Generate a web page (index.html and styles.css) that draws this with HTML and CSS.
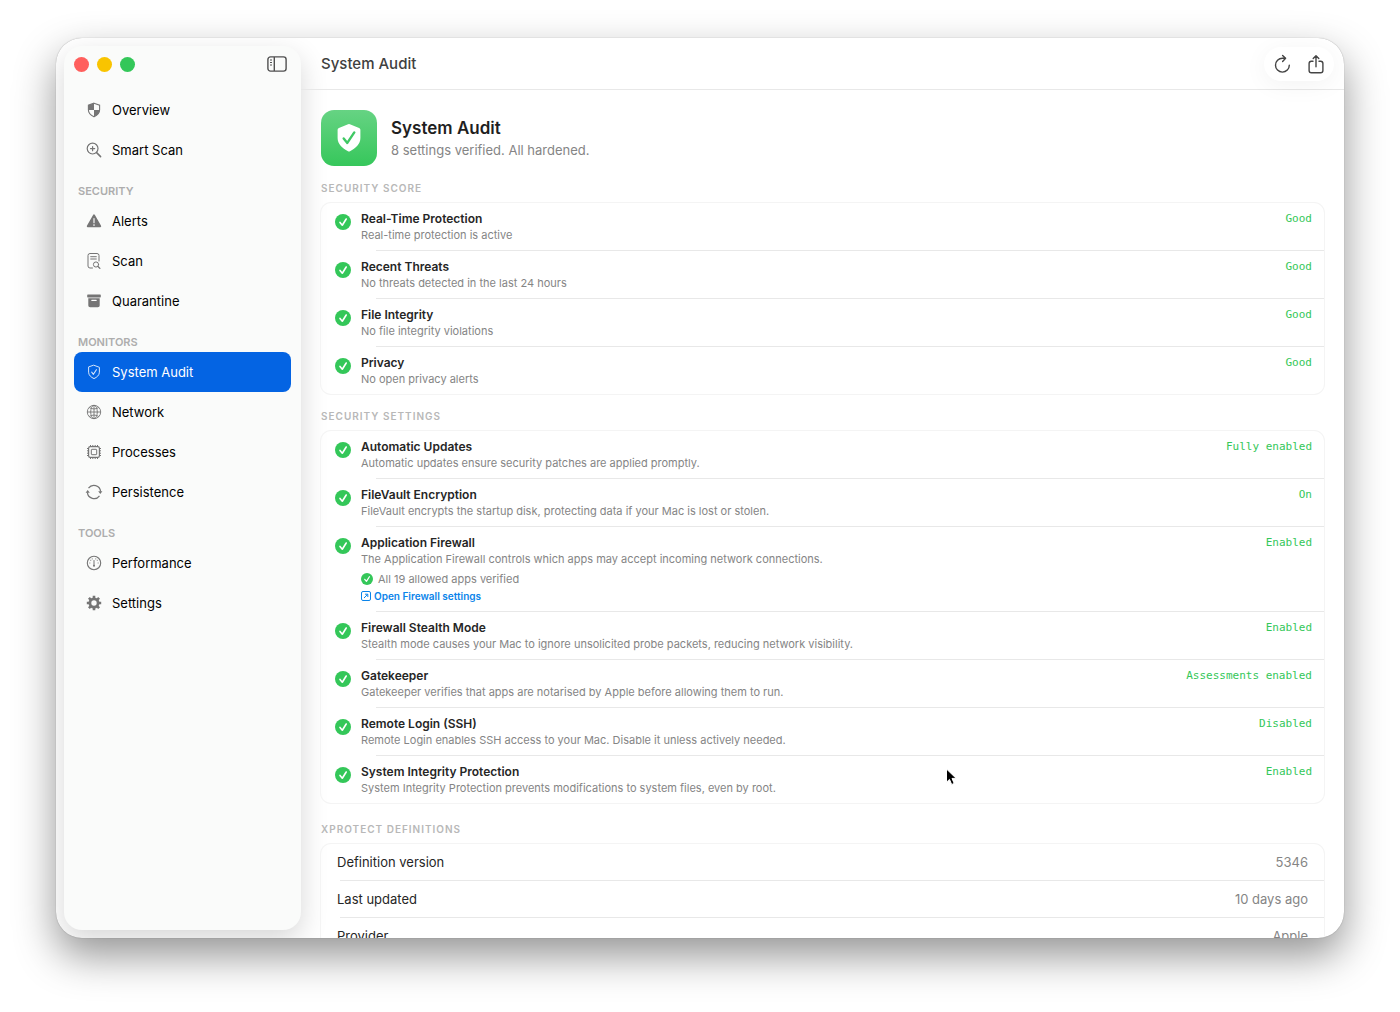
FILE: index.html
```html
<!DOCTYPE html>
<html lang="en">
  <head>
    <meta charset="utf-8">
    <title>System Audit</title>
    <link rel="stylesheet" href="styles.css">
  </head>
  <body>
    <!-- shared icons -->
    <svg class="defs" width="0" height="0" aria-hidden="true">
      <symbol id="check" viewBox="0 0 16 16">
        <circle cx="8" cy="8" r="8" fill="#34c759" />
        <path d="M5 8.4l2.3 2.8 3.9-6.2" fill="none" stroke="#fff" stroke-width="1.6" stroke-linecap="round" stroke-linejoin="round" />
      </symbol>
    </svg>

    <div class="window">
      <aside class="sidebar">
        <div class="sidebar-top">
          <div class="lights">
            <button class="light red" type="button" aria-label="Close"></button>
            <button class="light yellow" type="button" aria-label="Minimize"></button>
            <button class="light green" type="button" aria-label="Zoom"></button>
          </div>
          <button class="icon-btn" type="button" aria-label="Toggle sidebar">
            <svg width="20" height="16" viewBox="0 0 20 16" fill="none" stroke="#505050" stroke-width="1.4">
              <rect x="0.9" y="0.9" width="18.2" height="14.2" rx="2.6" />
              <path d="M7.3 1v14" />
              <path d="M3 4h2M3 6.5h2M3 9h2" stroke-width="1" />
            </svg>
          </button>
        </div>

        <nav>
          <a class="nav-item" href="#">
            <svg viewBox="0 0 16 16"><path d="M8 1.2l5.600 2v4.900c0 3.200-2.600 5.300-5.600 6.700-3-1.400-5.600-3.500-5.600-6.700V3.200z" fill="none" stroke="currentColor" stroke-width="1.100" /><path d="M8 1.200v6.800H2.400V3.200zM8 8h5.600c0 3.200-2.600 5.400-5.600 6.800z" fill="currentColor" /></svg>
            Overview
          </a>
          <a class="nav-item" href="#">
            <svg viewBox="0 0 16 16" fill="none" stroke="currentColor" stroke-width="1.2" stroke-linecap="round"><circle cx="6.600" cy="6.600" r="5.400" /><path d="M10.600 10.600l4 4" stroke-width="1.500" /><path d="M6.600 4.500v4.200M4.500 6.600h4.200" /></svg>
            Smart Scan
          </a>

          <h2 class="nav-label">SECURITY</h2>
          <a class="nav-item" href="#">
            <svg viewBox="0 0 16 16"><path d="M8 2.200L14.300 13.300H1.700z" fill="currentColor" stroke="currentColor" stroke-width="1.800" stroke-linejoin="round" /><path d="M8 5.600v4.200M8 11.500v1" stroke="#fff" stroke-width="1.100" stroke-linecap="round" /></svg>
            Alerts
          </a>
          <a class="nav-item" href="#">
            <svg viewBox="0 0 16 16" fill="none" stroke="currentColor" stroke-linecap="round"><path d="M6.500 15H4a2 2 0 0 1-2-2V2.500a2 2 0 0 1 2-2h7a2 2 0 0 1 2 2V8M4.700 3.700h5.600M4.700 6h5.600" /><circle cx="10" cy="11.500" r="2.600" /><path d="M12 13.500l1.900 1.900" stroke-width="1.300" /></svg>
            Scan
          </a>
          <a class="nav-item" href="#">
            <svg viewBox="0 0 16 16"><path d="M1.800 1.600h12.400q.6 0 .6.600v1.600q0 .6-.6.600H1.800q-.6 0-.6-.6V2.200q0-.6.6-.6zM2.300 5.300h11.400v7.200q0 1.800-1.800 1.800H4.100q-1.800 0-1.800-1.800z" fill="currentColor" /><path d="M5.800 7.300h4.400" stroke="#fff" stroke-width="1.200" stroke-linecap="round" /></svg>
            Quarantine
          </a>

          <h2 class="nav-label">MONITORS</h2>
          <a class="nav-item active" href="#" aria-current="page">
            <svg viewBox="0 0 16 16" fill="none" stroke="currentColor" stroke-linecap="round" stroke-linejoin="round"><path d="M8 1.300l5.400 2v4.900c0 3-2.500 5.100-5.400 6.400-2.900-1.300-5.400-3.400-5.400-6.400V3.300z" /><path d="M5.700 8.200l1.700 2.100 3-4.600" stroke-width="1.100" /></svg>
            System Audit
          </a>
          <a class="nav-item" href="#">
            <svg viewBox="0 0 16 16" fill="none" stroke="currentColor" stroke-width="0.9"><circle cx="8" cy="8" r="6.700" /><ellipse cx="8" cy="8" rx="3.300" ry="6.700" /><path d="M8 1.300v13.400M1.300 8h13.400M3.200 3.500c2.800 1.900 6.800 1.900 9.600 0M3.200 12.500c2.800-1.900 6.800-1.900 9.600 0" /></svg>
            Network
          </a>
          <a class="nav-item" href="#">
            <svg viewBox="0 0 16 16" fill="none" stroke="currentColor"><rect x="2.600" y="2.600" width="10.800" height="10.800" rx="1.600" stroke-width="1.200" /><rect x="5.300" y="5.300" width="5.400" height="5.400" rx="0.600" /><path d="M4.500 1v1.500M6.800 1v1.500M9.200 1v1.500M11.500 1v1.500M4.500 13.500V15M6.800 13.500V15M9.200 13.500V15M11.500 13.500V15M1 4.500h1.500M1 6.800h1.500M1 9.200h1.500M1 11.500h1.500M13.500 4.500H15M13.500 6.800H15M13.500 9.200H15M13.500 11.500H15" /></svg>
            Processes
          </a>
          <a class="nav-item" href="#">
            <svg viewBox="0 0 16 16" fill="none" stroke="currentColor" stroke-width="1.200"><path d="M2.500 4.200A6.700 6.700 0 0 1 14.600 7.600M13.500 11.800A6.700 6.700 0 0 1 1.400 8.400" /><path d="M12.200 7.300h4.200l-2.100 2.600zM-.4 8.700h4.200L1.700 6.100z" fill="currentColor" stroke="none" /></svg>
            Persistence
          </a>

          <h2 class="nav-label">TOOLS</h2>
          <a class="nav-item" href="#">
            <svg viewBox="0 0 16 16" fill="none" stroke="currentColor" stroke-linecap="round"><circle cx="8" cy="8" r="6.700" stroke-width="1.100" /><path d="M8 5.500v5" stroke-width="1" /><circle cx="8" cy="10.700" r="1" fill="currentColor" stroke="none" /><path d="M3.800 8h.1M12.100 8h.1M4.700 5.300h.1M11.200 5.300h.1M6.200 3.900h.1M9.700 3.900h.1" stroke-width="1" /></svg>
            Performance
          </a>
          <a class="nav-item" href="#">
            <svg viewBox="0 0 16 16" fill="none" stroke="currentColor"><circle cx="8" cy="8" r="4.100" stroke-width="2.800" /><path d="M8 .8v2.500M8 12.700v2.500M.8 8h2.500M12.700 8h2.500M2.900 2.900l1.800 1.800M11.300 11.300l1.800 1.800M2.900 13.100l1.800-1.800M11.300 4.700l1.800-1.800" stroke-width="2.600" /></svg>
            Settings
          </a>
        </nav>
      </aside>

      <main class="main">
        <header class="toolbar">
          <h1 class="toolbar-title">System Audit</h1>
          <div class="toolbar-actions">
            <button class="icon-btn" type="button" aria-label="Refresh">
              <svg width="20" height="20" viewBox="0 0 20 20" fill="none" stroke="#454545" stroke-width="1.400" stroke-linecap="round" stroke-linejoin="round"><path d="M17.300 11.200a6.900 6.900 0 1 1-6.900-6.900h2.800M10.600 1.400l3 2.900-3 3.200" /></svg>
            </button>
            <button class="icon-btn" type="button" aria-label="Share">
              <svg width="20" height="20" viewBox="0 0 20 20" fill="none" stroke="#454545" stroke-width="1.400" stroke-linecap="round" stroke-linejoin="round"><path d="M7 7.300H5.400a2.300 2.300 0 0 0-2.300 2.300v6.900a2.300 2.300 0 0 0 2.300 2.300h9.200a2.300 2.300 0 0 0 2.300-2.300V9.600a2.300 2.300 0 0 0-2.300-2.300H13M10 12.800V1.800M7.200 4.500L10 1.700 12.800 4.500" /></svg>
            </button>
          </div>
        </header>

        <div class="content">
          <div class="hero">
            <div class="hero-icon">
              <svg width="28" height="30" viewBox="0 0 28 30"><path d="M13.100 1.300q.9-.4 1.800 0l9.200 3.600q1.300.5 1.300 1.900V15c0 6.200-4.700 10-10.400 13.200q-1 .6-2 0C7.300 25 2.600 21.200 2.600 15V6.800q0-1.400 1.300-1.900z" fill="#fff" /><path d="M8.700 15.500l3.600 4.400 7-10.500" fill="none" stroke="#40c864" stroke-width="2.400" stroke-linecap="round" stroke-linejoin="round" /></svg>
            </div>
            <div>
              <h2 class="hero-title">System Audit</h2>
              <p class="hero-sub">8 settings verified. All hardened.</p>
            </div>
          </div>

          <h3 class="section-label">SECURITY SCORE</h3>
          <ul class="card">
            <li class="row">
              <svg class="check"><use href="#check" /></svg>
              <div class="row-text">
                <h4>Real-Time Protection</h4>
                <p>Real-time protection is active</p>
              </div>
              <span class="status">Good</span>
            </li>
            <li class="row">
              <svg class="check"><use href="#check" /></svg>
              <div class="row-text">
                <h4>Recent Threats</h4>
                <p>No threats detected in the last 24 hours</p>
              </div>
              <span class="status">Good</span>
            </li>
            <li class="row">
              <svg class="check"><use href="#check" /></svg>
              <div class="row-text">
                <h4>File Integrity</h4>
                <p>No file integrity violations</p>
              </div>
              <span class="status">Good</span>
            </li>
            <li class="row">
              <svg class="check"><use href="#check" /></svg>
              <div class="row-text">
                <h4>Privacy</h4>
                <p>No open privacy alerts</p>
              </div>
              <span class="status">Good</span>
            </li>
          </ul>

          <h3 class="section-label">SECURITY SETTINGS</h3>
          <ul class="card">
            <li class="row">
              <svg class="check"><use href="#check" /></svg>
              <div class="row-text">
                <h4>Automatic Updates</h4>
                <p>Automatic updates ensure security patches are applied promptly.</p>
              </div>
              <span class="status">Fully enabled</span>
            </li>
            <li class="row">
              <svg class="check"><use href="#check" /></svg>
              <div class="row-text">
                <h4>FileVault Encryption</h4>
                <p>FileVault encrypts the startup disk, protecting data if your Mac is lost or stolen.</p>
              </div>
              <span class="status">On</span>
            </li>
            <li class="row">
              <svg class="check"><use href="#check" /></svg>
              <div class="row-text">
                <h4>Application Firewall</h4>
                <p>The Application Firewall controls which apps may accept incoming network connections.</p>
                <div class="verified">
                  <svg width="12" height="12"><use href="#check" /></svg>
                  All 19 allowed apps verified
                </div>
                <a class="link" href="#">
                  <svg width="10" height="10" viewBox="0 0 10 10" fill="none" stroke="currentColor"><rect x="0.500" y="0.500" width="9" height="9" rx="1.500" /><path d="M3 7l3.500-3.500M4 3.200h2.800V6" /></svg>
                  Open Firewall settings
                </a>
              </div>
              <span class="status">Enabled</span>
            </li>
            <li class="row">
              <svg class="check"><use href="#check" /></svg>
              <div class="row-text">
                <h4>Firewall Stealth Mode</h4>
                <p>Stealth mode causes your Mac to ignore unsolicited probe packets, reducing network visibility.</p>
              </div>
              <span class="status">Enabled</span>
            </li>
            <li class="row">
              <svg class="check"><use href="#check" /></svg>
              <div class="row-text">
                <h4>Gatekeeper</h4>
                <p>Gatekeeper verifies that apps are notarised by Apple before allowing them to run.</p>
              </div>
              <span class="status">Assessments enabled</span>
            </li>
            <li class="row">
              <svg class="check"><use href="#check" /></svg>
              <div class="row-text">
                <h4>Remote Login (SSH)</h4>
                <p>Remote Login enables SSH access to your Mac. Disable it unless actively needed.</p>
              </div>
              <span class="status">Disabled</span>
            </li>
            <li class="row">
              <svg class="check"><use href="#check" /></svg>
              <div class="row-text">
                <h4>System Integrity Protection</h4>
                <p>System Integrity Protection prevents modifications to system files, even by root.</p>
              </div>
              <span class="status">Enabled</span>
            </li>
          </ul>

          <h3 class="section-label definitions-label">XPROTECT DEFINITIONS</h3>
          <dl class="card">
            <div class="def-row"><dt>Definition version</dt><dd>5346</dd></div>
            <div class="def-row"><dt>Last updated</dt><dd>10 days ago</dd></div>
            <div class="def-row"><dt>Provider</dt><dd>Apple</dd></div>
          </dl>
        </div>
      </main>
    </div>

    <svg class="cursor" width="14" height="20" viewBox="0 0 14 20" aria-hidden="true"><path d="M1.500 1v13.200l3-2.800 2.200 5.100 2.500-1.100-2.200-5h4.200z" fill="#000" stroke="#fff" stroke-width="1" /></svg>
  </body>
</html>
```
FILE: styles.css
```css
* {
  box-sizing: border-box;
}

body {
  margin: 0;
  height: 100vh;
  padding: 38px 56px 74px;
  background: #fff;
  color: #262626;
  font-family: Inter, "Liberation Sans", sans-serif;
  font-size: 13px;
  overflow: hidden;
}

h1,
h2,
h3,
h4,
p,
ul,
dl,
dd {
  margin: 0;
  padding: 0;
}

button {
  border: none;
  padding: 0;
  background: none;
}

.defs {
  position: absolute;
}

.window {
  display: flex;
  height: 100%;
  background: #fff;
  border-radius: 26px;
  overflow: hidden;
  box-shadow: 0 0 1px rgba(0, 0, 0, 0.4), 0 18px 42px rgba(0, 0, 0, 0.42);
}

/* Sidebar */
.sidebar {
  flex: 0 0 237px;
  margin: 8px 0 8px 8px;
  padding: 0 10px;
  background: #fafbfa;
  border-radius: 18px;
  box-shadow: 0 10px 28px rgba(0, 0, 0, 0.16);
}

.sidebar-top {
  display: flex;
  justify-content: space-between;
  align-items: center;
  height: 36px;
  margin-bottom: 8px;
  padding: 0 4px 0 0;
}

.lights {
  display: flex;
  gap: 8px;
}

.light {
  width: 15px;
  height: 15px;
  border-radius: 50%;
}

.red {
  background: #ff5f5d;
}

.yellow {
  background: #f9c400;
}

.green {
  background: #33c759;
}

.icon-btn svg {
  display: block;
}

.nav-item {
  display: flex;
  align-items: center;
  gap: 10px;
  height: 40px;
  padding: 0 12px;
  border-radius: 8px;
  color: #000;
  text-decoration: none;
}

.nav-item svg {
  width: 16px;
  height: 16px;
  color: #757575;
  overflow: visible;
}

.nav-item.active {
  background: #0464e3;
  color: #fff;
}

.nav-item.active svg {
  color: #d5e5fb;
}

.nav-label {
  padding: 14px 4px 3px;
  color: #adadad;
  font-size: 11px;
  line-height: 14px;
  font-weight: 600;
}

/* Main */
.main {
  flex: 1;
  min-width: 0;
}

.toolbar {
  display: flex;
  justify-content: space-between;
  align-items: center;
  height: 52px;
  padding: 0 10px 0 20px;
  border-bottom: 1px solid #e8e8e8;
}

.toolbar-title {
  color: #404040;
  font-size: 15px;
  font-weight: 500;
}

.toolbar-actions {
  display: flex;
  align-items: center;
  gap: 14px;
  height: 34px;
  padding: 0 8px;
  border-radius: 17px;
  background: #fff;
  box-shadow: 0 4px 24px rgba(0, 0, 0, 0.05);
}

.content {
  padding: 20px;
}

.hero {
  display: flex;
  align-items: center;
  gap: 14px;
}

.hero-icon {
  display: flex;
  align-items: center;
  justify-content: center;
  width: 56px;
  height: 56px;
  border-radius: 13px;
  background: linear-gradient(#66d383, #36c75b);
}

.hero-title {
  color: #1f1f1f;
  font-size: 17px;
  line-height: 24px;
  font-weight: 600;
}

.hero-sub {
  color: #858585;
  font-size: 13px;
  line-height: 20px;
}

.section-label {
  margin: 15px 0 8px;
  color: #b8b8b8;
  font-size: 10px;
  line-height: 14px;
  font-weight: 600;
  letter-spacing: 1px;
}

.definitions-label {
  margin-top: 19px;
}

.card {
  list-style: none;
  border-radius: 10px;
  box-shadow: 0 0 0 1px #f4f4f4;
}

.row {
  display: flex;
  position: relative;
  gap: 10px;
  padding: 7px 12px 8px 14px;
}

.row:last-child {
  padding-bottom: 7px;
}

/* inset separator between rows */
.row:not(:last-child)::after,
.def-row:not(:last-child)::after {
  content: "";
  position: absolute;
  left: 55px;
  right: 0;
  bottom: 0;
  height: 1px;
  background: #e8e8e8;
}

.check {
  flex: none;
  width: 16px;
  height: 16px;
  margin-top: 4px;
}

.row-text {
  flex: 1;
}

.row h4 {
  font-size: 12px;
  line-height: 18px;
  font-weight: 600;
}

.row p {
  color: #858585;
  font-size: 11px;
  line-height: 15px;
}

.status {
  color: #34c759;
  font-family: "DejaVu Sans Mono", "Liberation Mono", monospace;
  font-size: 11px;
  line-height: 18px;
}

.verified {
  display: flex;
  align-items: center;
  gap: 5px;
  margin-top: 4px;
  color: #858585;
  font-size: 11px;
  line-height: 16px;
}

.link {
  display: flex;
  align-items: center;
  gap: 3px;
  width: max-content;
  margin-top: 1px;
  color: #0a84ea;
  font-size: 10px;
  line-height: 16px;
  font-weight: 600;
  text-decoration: none;
}

.def-row {
  display: flex;
  position: relative;
  justify-content: space-between;
  padding: 0 16px;
  line-height: 37px;
}

.def-row:not(:last-child)::after {
  left: 19px;
}

.def-row dd {
  color: #858585;
}

.cursor {
  position: absolute;
  left: 945px;
  top: 768px;
}
```
